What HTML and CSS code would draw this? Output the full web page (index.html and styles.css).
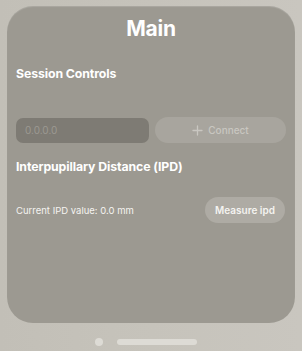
FILE: index.html
```html
<!DOCTYPE html>
<html lang="en">
<head>
  <meta charset="UTF-8">
  <title>Main</title>
  <link rel="stylesheet" href="styles.css">
</head>
<body>

<div class="window">
  <h1>Main</h1>

  <h2 class="session-title">Session Controls</h2>
  <div class="row connect-row">
    <input class="ip" type="text" placeholder="0.0.0.0">
    <button class="btn connect">
      <svg width="11" height="11" viewBox="0 0 11 11"><path d="M5.5 1v9M1 5.5h9" stroke="currentColor" stroke-width="1.3" stroke-linecap="round"/></svg>
      Connect
    </button>
  </div>

  <h2 class="ipd-title">Interpupillary Distance (IPD)</h2>
  <div class="row ipd-row">
    <span class="ipd-value">Current IPD value: 0.0 mm</span>
    <button class="btn measure">Measure ipd</button>
  </div>
</div>

<div class="bottom">
  <span class="dot"></span>
  <span class="bar"></span>
</div>

</body>
</html>
```

FILE: styles.css
```css
body { margin: 0; height: 351px; background: linear-gradient(90deg, #c2bfb7, #c6c3bb 50%, #c9c6bf); font-family: Inter, "Noto Sans", sans-serif; color: #fff; overflow: hidden; }
.window {
  margin: 6px 7px 0; height: 317px; box-sizing: border-box;
  background: #9c9991; border-radius: 26px; padding: 0 9px 0 9px;
  box-shadow: inset 0 1px 1px rgba(255,255,255,0.15);
}
h1 { margin: 0; padding-top: 9px; text-align: center; font-size: 21px; font-weight: 700; line-height: 28px; letter-spacing: -0.2px; }
h2 { margin: 0; font-size: 12.3px; font-weight: 700; line-height: 16px; letter-spacing: -0.1px; }
.session-title { margin-top: 23px; }
.row { display: flex; align-items: center; }
.connect-row { margin-top: 35px; gap: 6px; }
.ip {
  width: 133px; height: 25px; box-sizing: border-box; border: none; outline: none;
  background: #7e7b74; border-radius: 7px; padding: 0 9px;
  font-family: inherit; font-size: 10px; color: #fff;
}
.ip::placeholder { color: #9c9992; }
.btn {
  border: none; font-family: inherit; border-radius: 13px; cursor: pointer;
  display: flex; align-items: center; justify-content: center;
}
.connect { flex: 1; height: 26px; gap: 5px; background: #a8a59e; color: #c9c7c1; font-size: 10px; font-weight: 500; }
.ipd-title { margin-top: 16px; }
.ipd-row { margin-top: 22px; justify-content: space-between; }
.ipd-value { font-size: 9.5px; color: #f4f3f0; }
.measure { width: 80px; height: 26px; background: #aeaba4; color: #f4f3f0; font-size: 10px; font-weight: 600; margin-right: 1px; }
.bottom { display: flex; align-items: center; justify-content: center; gap: 14px; margin-top: 15px; padding-right: 10px; }
.dot { width: 8px; height: 8px; border-radius: 50%; background: #dddbd5; }
.bar { width: 80px; height: 6px; border-radius: 3px; background: #dddbd5; }
```
